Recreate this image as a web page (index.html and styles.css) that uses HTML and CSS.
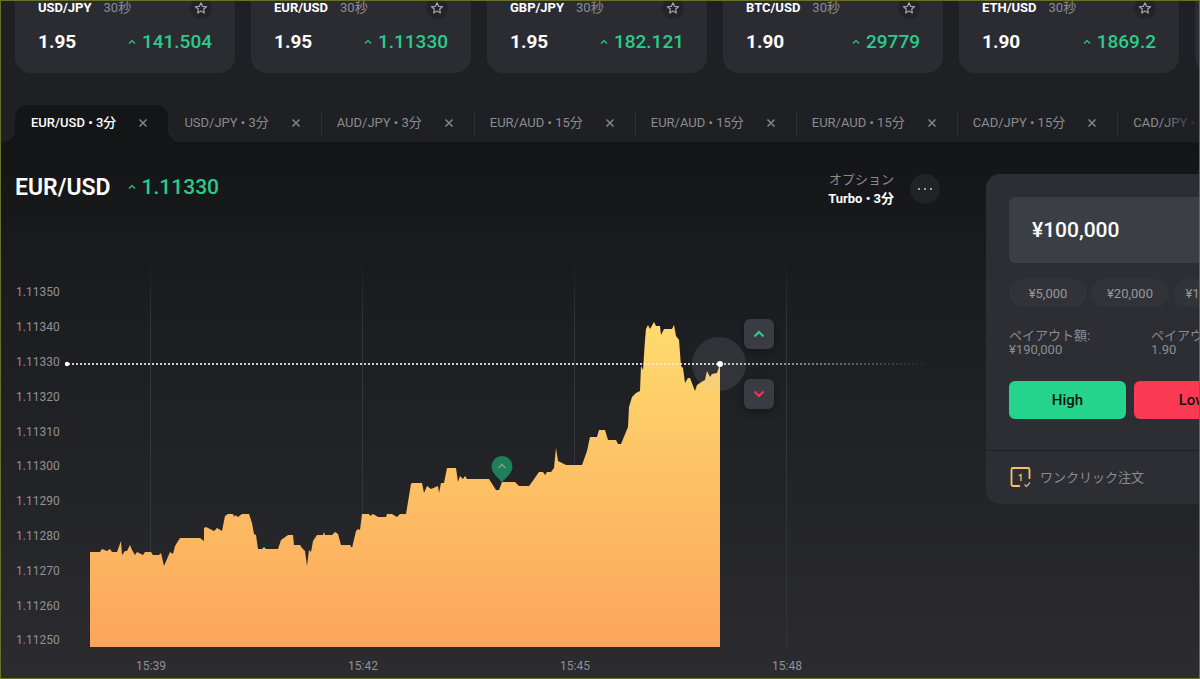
FILE: index.html
```html
<!DOCTYPE html>
<html lang="ja">
<head>
<meta charset="utf-8">
<title>EUR/USD</title>
<link rel="stylesheet" href="styles.css">
</head>
<body>
<svg class="sprite" aria-hidden="true">
  <symbol id="star" viewBox="0 0 14 14"><path d="M7 1.8 8.6 5.3 12.4 5.7 9.6 8.2 10.4 12 7 10 3.6 12 4.4 8.2 1.6 5.7 5.4 5.3Z" fill="none" stroke="currentColor" stroke-width="1.2" stroke-linejoin="round"/></symbol>
  <symbol id="up" viewBox="0 0 8 6"><path d="M1 4.5 4 1.5 7 4.5" fill="none" stroke="currentColor" stroke-width="1.2"/></symbol>
  <symbol id="close" viewBox="0 0 10 10"><path d="M1.5 1.5 8.5 8.5M8.5 1.5 1.5 8.5" fill="none" stroke="currentColor" stroke-width="1.5"/></symbol>
</svg>
<div class="app">
  <section class="cards">
    <article class="card">
      <div class="card-head"><b>USD/JPY</b><span>30秒</span><button class="star" aria-label="お気に入り"><svg><use href="#star"/></svg></button></div>
      <div class="card-body"><b>1.95</b><span class="rate"><svg><use href="#up"/></svg>141.504</span></div>
    </article>
    <article class="card">
      <div class="card-head"><b>EUR/USD</b><span>30秒</span><button class="star" aria-label="お気に入り"><svg><use href="#star"/></svg></button></div>
      <div class="card-body"><b>1.95</b><span class="rate"><svg><use href="#up"/></svg>1.11330</span></div>
    </article>
    <article class="card">
      <div class="card-head"><b>GBP/JPY</b><span>30秒</span><button class="star" aria-label="お気に入り"><svg><use href="#star"/></svg></button></div>
      <div class="card-body"><b>1.95</b><span class="rate"><svg><use href="#up"/></svg>182.121</span></div>
    </article>
    <article class="card">
      <div class="card-head"><b>BTC/USD</b><span>30秒</span><button class="star" aria-label="お気に入り"><svg><use href="#star"/></svg></button></div>
      <div class="card-body"><b>1.90</b><span class="rate"><svg><use href="#up"/></svg>29779</span></div>
    </article>
    <article class="card">
      <div class="card-head"><b>ETH/USD</b><span>30秒</span><button class="star" aria-label="お気に入り"><svg><use href="#star"/></svg></button></div>
      <div class="card-body"><b>1.90</b><span class="rate"><svg><use href="#up"/></svg>1869.2</span></div>
    </article>
    <article class="card"></article>
  </section>

  <nav class="tabs">
    <div class="tab active"><a href="#t1">EUR/USD • 3分</a><button aria-label="閉じる"><svg><use href="#close"/></svg></button></div>
    <div class="tab"><a href="#t2">USD/JPY • 3分</a><button aria-label="閉じる"><svg><use href="#close"/></svg></button></div>
    <div class="tab"><a href="#t3">AUD/JPY • 3分</a><button aria-label="閉じる"><svg><use href="#close"/></svg></button></div>
    <div class="tab"><a href="#t4">EUR/AUD • 15分</a><button aria-label="閉じる"><svg><use href="#close"/></svg></button></div>
    <div class="tab"><a href="#t5">EUR/AUD • 15分</a><button aria-label="閉じる"><svg><use href="#close"/></svg></button></div>
    <div class="tab"><a href="#t6">EUR/AUD • 15分</a><button aria-label="閉じる"><svg><use href="#close"/></svg></button></div>
    <div class="tab"><a href="#t7">CAD/JPY • 15分</a><button aria-label="閉じる"><svg><use href="#close"/></svg></button></div>
    <div class="tab"><a href="#t8">CAD/JPY • 15分</a></div>
  </nav>

  <main class="main">
    <section class="trade">
      <header class="trade-head">
        <h1>EUR/USD</h1>
        <span class="rate big"><svg><use href="#up"/></svg>1.11330</span>
        <div class="option"><span>オプション</span><b>Turbo • 3分</b></div>
        <button class="more" aria-label="その他"><i></i><i></i><i></i></button>
      </header>
      <div class="chart">
        <svg class="plot" viewBox="15 250 925 428" width="925" height="428">
          <defs>
            <linearGradient id="area" gradientUnits="userSpaceOnUse" x1="0" y1="322" x2="0" y2="647">
              <stop offset="0" stop-color="#ffdb6e"/><stop offset="1" stop-color="#fba55b"/>
            </linearGradient>
            <linearGradient id="grid" gradientUnits="userSpaceOnUse" x1="0" y1="255" x2="0" y2="330">
              <stop offset="0" stop-color="#34353a" stop-opacity="0"/><stop offset="1" stop-color="#34353a"/>
            </linearGradient>
            <linearGradient id="fade" gradientUnits="userSpaceOnUse" x1="720" y1="0" x2="930" y2="0">
              <stop offset="0" stop-color="#fff" stop-opacity=".75"/><stop offset="1" stop-color="#fff" stop-opacity="0"/>
            </linearGradient>
          </defs>
          <path d="M150.5 255V647M362.5 255V647M574.5 255V647M786.5 255V647" stroke="url(#grid)"/>
          <path fill="url(#area)" d="M90 647V552H100L102 549 107 551 110 549 112 552H117L121 541 122 555 125 551H127L130 545 132 550 135 555 137 552 143 555 145 552H151L153 555H159L161 553 164 566 170 552 173 554 175 546 180 538H200L204 541V528L206 527 214 531 217 528 222 531 225 516 228 514H233L234 517 235 515 238 517 242 514H249L252 523 254 534 256 535 258 549H262L264 547 266 549H278L281 540 288 535H293L294 545H300L302 548 305 551 307 566 309 550 311 552 313 541 317 535H323L324 532 325 535H332L335 532 338 534 341 545H350L352 548 356 531 358 529 360 530 362 514H369L370 516 373 514 378 517H386L387 514H392L397 517 400 514H406L411 484 412 483H422L424 493 427 486 431 489 438 486 439 493 441 483H444L447 468H456L458 482 460 476 463 479 465 476 467 479H489L496 490H499L502 482H515L519 486H529L532 482 539 472H543L545 475 547 472H551L554 468 556 448 558 461 566 465H582L587 451 590 437H597L599 430H605L608 440H616L618 444H621L628 427 629 407 632 397 636 393 640 391 641 366 643 370 645 340 646 329 648 325 650 329 654 322 656 326H660L661 335 664 329H672L674 325 676 336 679 340 681 366 683 368 685 383 688 378 690 378 695 391 697 385 703 381 705 380 707 371 710 377 712 374 717 373 720 364V647Z"/>
          <circle cx="719" cy="364" r="27" fill="#c8c8dc" fill-opacity=".12"/>
          <path d="M68 364H720" stroke="#eee" stroke-width="2" stroke-dasharray="2 2" stroke-opacity=".85"/>
          <path d="M720 364 930 364.01" stroke="url(#fade)" stroke-width="2" stroke-dasharray="2 2"/>
          <circle cx="67" cy="364" r="2.2" fill="#fff"/>
          <circle cx="720" cy="364" r="3" fill="#fff"/>
          <path d="M502 483C500 478.500 491.500 474 491.500 466.500A10.500 10.500 0 0 1 512.500 466.500C512.500 474 504 478.500 502 483Z" fill="#1f7f58"/>
          <path d="M498.500 468 502 464.500 505.500 468" fill="none" stroke="#7fa08c" stroke-width="1.5"/>
          <g class="axis">
            <text x="16" y="296">1.11350</text><text x="16" y="331">1.11340</text><text x="16" y="366">1.11330</text><text x="16" y="401">1.11320</text><text x="16" y="436">1.11310</text><text x="16" y="470">1.11300</text><text x="16" y="505">1.11290</text><text x="16" y="540">1.11280</text><text x="16" y="575">1.11270</text><text x="16" y="610">1.11260</text><text x="16" y="644">1.11250</text>
          </g>
          <g class="axis mid">
            <text x="151" y="670">15:39</text><text x="363" y="670">15:42</text><text x="575" y="670">15:45</text><text x="787" y="670">15:48</text>
          </g>
        </svg>
        <div class="quick">
          <button class="go-up" aria-label="High"><svg viewBox="0 0 12 8"><path d="M1.5 6.5 6 2 10.5 6.5"/></svg></button>
          <button class="go-down" aria-label="Low"><svg viewBox="0 0 12 8"><path d="M1.5 1.5 6 6 10.5 1.5"/></svg></button>
        </div>
      </div>
    </section>

    <aside class="panel">
      <div class="order">
        <input class="amount" aria-label="金額" value="¥100,000">
        <div class="chips"><button>¥5,000</button><button>¥20,000</button><button>¥100,000</button></div>
        <div class="payout">
          <div><span>ペイアウト額:</span><span>¥190,000</span></div>
          <div><span>ペイアウト率:</span><span>1.90</span></div>
        </div>
        <div class="actions"><button class="high">High</button><button class="low">Low</button></div>
      </div>
      <button class="one-click">
        <svg viewBox="0 0 22 22"><g fill="none" stroke="#fbbf66" stroke-width="1.8"><path d="M11 20H4A1.500 1.500 0 0 1 2.500 18.500V3.500A1.500 1.500 0 0 1 4 2H19A1.500 1.500 0 0 1 20.500 3.500V13"/><path d="M15.500 18.500 17.500 20.500 21 16.500" stroke="#e0a080" stroke-width="1.3"/><path d="M9.800 9.700 12 8.500V15" stroke-width="1.3"/></g></svg>
        ワンクリック注文
      </button>
    </aside>
  </main>
</div>
</body>
</html>
```
FILE: styles.css
```css
* { box-sizing: border-box; }
body {
  margin: 0;
  font-family: Roboto, "Noto Sans CJK JP", sans-serif;
  font-size: 13px;
  color: #8b8c90;
  background: #1f2024;
}
button, input { font: inherit; color: inherit; border: 0; padding: 0; background: none; }
button { cursor: pointer; display: flex; align-items: center; justify-content: center; }
a { color: inherit; text-decoration: none; }
b, h1 { font-weight: 700; color: #fff; }
h1 { margin: 0; }
.sprite { display: none; }
.app {
  display: flex;
  flex-direction: column;
  min-height: 100vh;
  border: 1px solid #6b7024;
  overflow: hidden;
}

.cards { display: flex; gap: 16px; padding-left: 14px; overflow: hidden; }
.card {
  flex: 0 0 220px;
  height: 72px;
  padding: 0 23px;
  background: #2b2c31;
  border-radius: 0 0 16px 16px;
}
.card-head { display: flex; align-items: center; gap: 12px; height: 14px; line-height: 16px; }
.star {
  width: 22px;
  height: 22px;
  margin-left: auto;
  border-radius: 50%;
  background: #232428;
  color: #a3a4a8;
}
.star svg { width: 14px; height: 14px; }
.card-body {
  display: flex;
  justify-content: space-between;
  align-items: center;
  margin-top: 15px;
  font-size: 19px;
  line-height: 24px;
}
.rate { display: flex; align-items: center; gap: 6px; font-weight: 500; color: #2bcb8a; }
.rate svg { width: 8px; height: 6px; }

.tabs {
  display: flex;
  position: relative;
  margin-top: 32px;
  padding-left: 14px;
  height: 37px;
  line-height: 20px;
}
.tabs::after {
  content: "";
  position: absolute;
  inset: 0 0 0 auto;
  width: 36px;
  background: linear-gradient(90deg, rgba(31, 32, 36, 0), #1f2024);
}
.tab {
  display: flex;
  flex: none;
  align-items: center;
  gap: 22px;
  padding: 0 20px 1px 16px;
  position: relative;
  white-space: nowrap;
}
.tab button { width: 10px; height: 12px; color: #85868a; }
.tab svg { width: 10px; height: 10px; }
.tab + .tab + .tab::before {
  content: "";
  position: absolute;
  left: 0;
  top: 7px;
  bottom: 6px;
  width: 1px;
  background: #303136;
}
.tab.active { color: #fff; background: #141517; border-radius: 12px 12px 0 0; font-weight: 500; }
.tab.active::before, .tab.active::after {
  content: "";
  position: absolute;
  bottom: 0;
  width: 12px;
  height: 12px;
}
.tab.active::before { right: 100%; background: radial-gradient(circle at 0 0, transparent 12px, #141517 12px); }
.tab.active::after { left: 100%; background: radial-gradient(circle at 100% 0, transparent 12px, #141517 12px); }

.main {
  flex: 1;
  display: grid;
  grid-template-columns: minmax(925px, 1fr) 288px;
  gap: 46px;
  align-items: start;
  padding-left: 14px;
  background: linear-gradient(#141517, #1d1e21 35%, #2b2b30);
}
.trade-head { display: flex; align-items: center; height: 93px; margin-bottom: 15px; }
.trade-head h1 { font-size: 23px; font-weight: 600; line-height: 28px; padding-bottom: 2px; }
.rate.big { margin-left: 17px; font-size: 21px; line-height: 28px; padding-bottom: 3px; }
.option { margin-left: auto; display: grid; justify-items: end; line-height: 19px; }
.more {
  gap: 4px;
  width: 30px;
  height: 30px;
  margin-left: 16px;
  border-radius: 50%;
  background: #222327;
}
.more i { width: 2px; height: 2px; background: #a0a1a4; }
.chart { position: relative; }
.plot { display: block; }
.axis { font-size: 12px; fill: #909195; }
.mid { text-anchor: middle; }
.quick { position: absolute; left: 729px; top: 69px; display: grid; gap: 30px; }
.quick button {
  width: 30px;
  height: 30px;
  border-radius: 6px;
  background: #3b3c43;
  box-shadow: 0 2px 6px rgba(0, 0, 0, .35);
}
.quick svg { width: 12px; height: 8px; fill: none; stroke: currentColor; stroke-width: 2px; }
.go-up { color: #27cf8a; }
.go-down { color: #f0365c; }

.panel { margin-top: 32px; background: #2d2e33; border-radius: 14px; }
.order { padding: 23px 23px 31px; border-bottom: 1px solid #202125; }
.amount {
  display: block;
  width: 100%;
  height: 66px;
  padding: 0 23px;
  border-radius: 6px;
  background: #3c3e45;
  color: #fff;
  font-size: 21px;
  font-weight: 500;
}
.chips { display: grid; grid-template-columns: repeat(3, 1fr); gap: 4px; margin-top: 16px; }
.chips button { height: 28px; border-radius: 14px; background: #323338; color: #96979b; }
.payout { display: grid; grid-template-columns: 1fr 100px; margin-top: 22px; line-height: 14px; }
.payout span { display: block; }
.actions { display: grid; grid-template-columns: 1fr 1fr; gap: 8px; margin-top: 24px; font-size: 15px; font-weight: 500; }
.actions button { height: 38px; border-radius: 6px; color: #111; }
.actions .high { background: #25d48c; }
.actions .low { background: #fa3a55; }
.one-click { gap: 9px; height: 53px; padding: 0 0 2px 23px; }
.one-click svg { width: 22px; height: 22px; }
```
